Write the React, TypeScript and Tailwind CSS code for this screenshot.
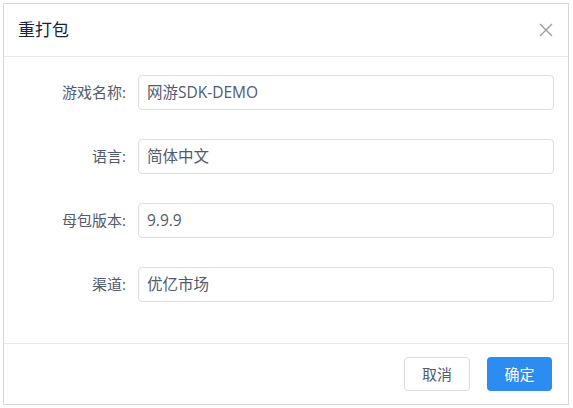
import React from 'react';

const fields = [
    { label: '游戏名称:', value: '网游SDK-DEMO' },
    { label: '语言:', value: '简体中文' },
    { label: '母包版本:', value: '9.9.9' },
    { label: '渠道:', value: '优亿市场' },
];

const App = () => {
    return (
        <main
            className="w-[573px] h-[408px] bg-white p-[3px]"
            style={{ fontFamily: '"Open Sans", "Noto Sans CJK SC", sans-serif' }}
        >
            <section className="h-[402px] w-[566px] border border-[#d7d7d7] flex flex-col bg-white">
                <header className="h-[53px] flex items-center justify-between pl-[14px] pr-[14px] border-b border-[#e8eaec]">
                    <h1 className="text-[17px] text-[#17233d]">重打包</h1>
                    <svg width="14" height="14" viewBox="0 0 14 14" className="mr-[1px]">
                        <path d="M1 1L13 13M13 1L1 13" stroke="#999" strokeWidth="1.2" fill="none" />
                    </svg>
                </header>
                <div className="flex flex-col gap-[29px] pt-[18px] pb-[41px]">
                    {fields.map((f) => (
                        <div key={f.label} className="flex items-center">
                            <label className="w-[134px] text-right pr-[12px] text-[15px] text-[#515a6e]">{f.label}</label>
                            <div className="w-[416px] h-[35px] border border-[#dcdee2] rounded-[4px] flex items-center px-[8px] text-[15.5px] text-[#515a6e]">
                                {f.value}
                            </div>
                        </div>
                    ))}
                </div>
                <footer className="flex-1 border-t border-[#e8eaec] flex items-center justify-end gap-[17px] pr-[16px]">
                    <button className="w-[66px] h-[34px] rounded-[4px] border border-[#dcdee2] bg-white text-[15px] text-[#515a6e]">取消</button>
                    <button className="w-[65px] h-[34px] rounded-[4px] bg-[#2d8cf0] text-[15px] text-white">确定</button>
                </footer>
            </section>
        </main>
    );
};

export default App;
